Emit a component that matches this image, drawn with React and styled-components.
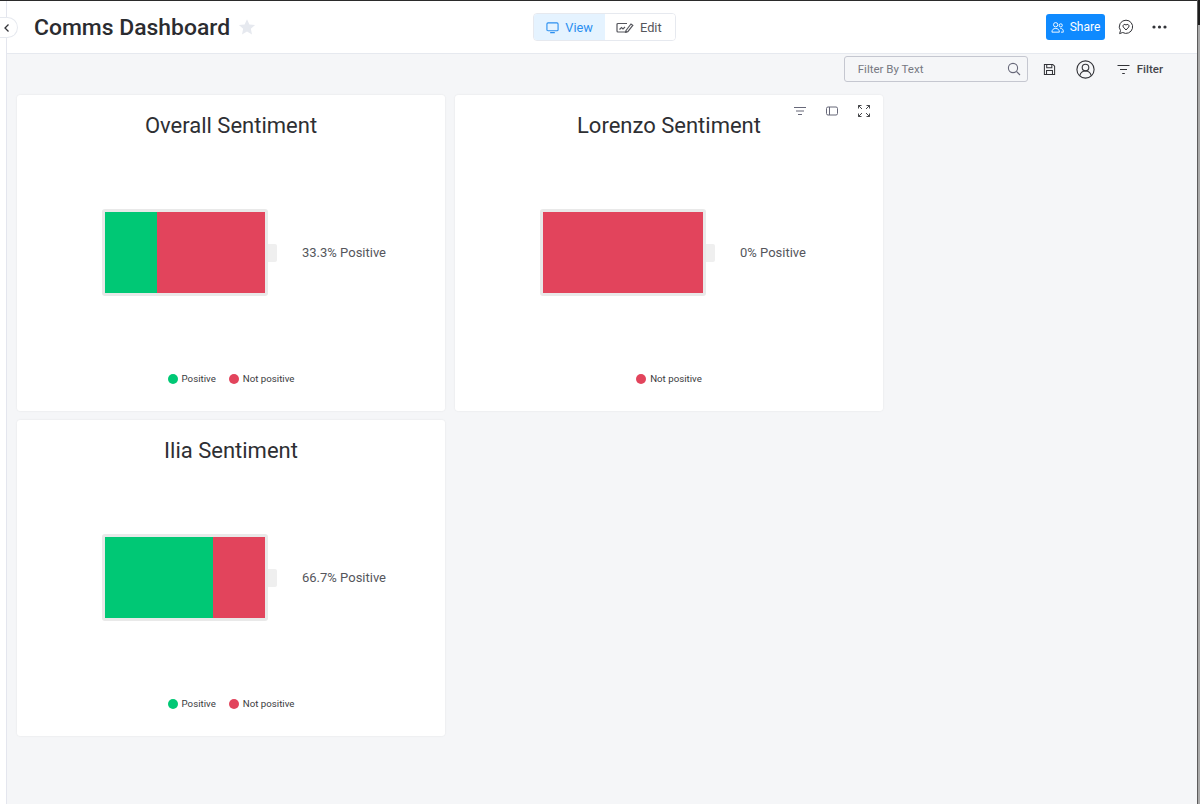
import React from "react";
import styled, { createGlobalStyle } from "styled-components";

const Global = createGlobalStyle`
  html, body { margin: 0; padding: 0; height: 100%; }
  body { font-family: Roboto, "Liberation Sans", sans-serif; background: #fff; overflow: hidden; }
  #root { height: 100%; }
`;

const Page = styled.div`
  width: 1200px; height: 804px; display: flex; position: relative; background: #fff; overflow: hidden;
`;
const WindowEdge = styled.div`
  width: 3px; flex: none; box-sizing: border-box; border-left: 1px solid #5c5c5c; background: #a9a9a9; display: flex; flex-direction: column;
`;
const EdgeCap = styled.div`height: 25px; background: #1c1c1c;`;
const Frame = styled.div`
  flex: 1; min-width: 0; display: flex; flex-direction: column; border-top: 1px solid #2b2b2b; box-sizing: border-box;
`;
const Shell = styled.div`
  flex: 1; margin-left: 6px; border-left: 1px solid #e4e6ee; display: flex; flex-direction: column; min-height: 0;
`;
const Header = styled.header`
  height: 53px; display: grid; grid-template-columns: 1fr auto 1fr; align-items: center;
  border-bottom: 1px solid #e6e9ef; box-sizing: border-box; padding: 0 30px 0 27px; background: #fff;
`;
const Collapse = styled.button`
  position: absolute; left: 0; top: 17px; width: 18px; height: 21px; border-radius: 0 11px 11px 0;
  border: 1px solid #e6e9ef; border-left: 0; background: #fff; padding: 0 4px 0 0; display: flex; align-items: center; justify-content: center; color: #323338;
`;
const TitleRow = styled.div`display: flex; align-items: center; gap: 8px;`;
const Title = styled.h1`margin: 0; font-size: 22.9px; font-weight: 500; color: #2b2c30;`;
const Toggle = styled.div`
  display: flex; height: 26px; border: 1px solid #e6e9ef; border-radius: 4px; overflow: hidden; margin-left: 8px;
`;
const ToggleItem = styled.div`
  display: flex; align-items: center; gap: 6px; font-size: 12.8px; padding: ${p => (p.$active ? "0 12px 0 12px" : "0 13px 0 11px")};
  background: ${p => (p.$active ? "#e5f3ff" : "#fff")}; color: ${p => (p.$active ? "#2b8ff0" : "#55565c")};
`;
const HeaderRight = styled.div`display: flex; justify-content: flex-end; align-items: center; gap: 13px;`;
const Share = styled.button`
  height: 26px; width: 59px; background: #0f8aff; border: 0; border-radius: 3px; color: #fff; font: 12px Roboto, sans-serif;
  display: flex; align-items: center; justify-content: center; gap: 6px; padding: 0;
`;
const IconBtn = styled.span`display: inline-flex; align-items: center; color: #323338; margin-left: ${p => p.$ml || 0}px;`;
const Content = styled.main`flex: 1; background: #f5f6f8; padding: 0 10px; min-height: 0;`;
const FilterBar = styled.div`
  height: 41px; display: flex; justify-content: flex-end; align-items: flex-start; padding: 2px 24px 0 0; box-sizing: border-box;
`;
const FilterItems = styled.div`height: 26px; display: flex; align-items: center;`;
const Search = styled.div`
  width: 184px; height: 26px; border: 1px solid #c5c7d0; border-radius: 3px; display: flex; align-items: center; justify-content: space-between;
  padding: 0 6px 0 13px; box-sizing: border-box; font-size: 11.5px; color: #777982; margin-right: 15px;
`;
const FilterLabel = styled.span`display: inline-flex; align-items: center; gap: 7px; font-size: 11.5px; font-weight: 500; color: #45464c; margin-left: 22px;`;
const Grid = styled.div`
  display: grid; grid-template-columns: repeat(2, 428px); grid-auto-rows: 315.5px; column-gap: 10px; row-gap: 9.5px;
`;
const Card = styled.section`
  background: #fff; border-radius: 3px; box-shadow: 0 0 2px rgba(0,0,0,.09); position: relative; display: flex; flex-direction: column; align-items: center; box-sizing: border-box;
`;
const CardTitle = styled.h2`margin: 17px 0 0; font-size: 22px; line-height: 28px; font-weight: 400; color: #2e2f33;`;
const Tools = styled.div`position: absolute; top: 9px; right: 12px; display: flex; gap: 18px; color: #676879;`;
const Chart = styled.div`position: absolute; left: 85px; top: 114px; display: flex; align-items: center;`;
const Battery = styled.div`
  width: 160px; height: 81px; border: 3px solid #e9e9e9; border-radius: 3px; display: flex; background: #e9e9e9;
`;
const Seg = styled.div`background: ${p => p.$c}; height: 100%;`;
const Nub = styled.div`width: 9px; height: 18px; background: #efefef; border-radius: 0 2px 2px 0;`;
const Pct = styled.div`font-size: 13px; color: #55565c; margin-left: 25px; white-space: nowrap;`;
const Legend = styled.div`position: absolute; left: 0; right: 0; top: 277px; display: flex; justify-content: center; gap: 13px; font-size: 9.7px; color: #3a3b40;`;
const LegendItem = styled.div`display: flex; align-items: center; gap: 4px; line-height: 14px;`;
const Dot = styled.span`width: 10px; height: 10px; border-radius: 50%; background: ${p => p.$c};`;

const G = "#00c875", R = "#e2445c";

const Sentiment = ({ title, pos, label, tools }) => (
  <Card>
    <CardTitle>{title}</CardTitle>
    {tools && (
      <Tools>
        <svg width="14" height="14" viewBox="0 0 14 14" fill="none" stroke="currentColor"><path d="M1 3.500h12M3 7h8M5 10.500h4" /></svg>
        <svg width="14" height="14" viewBox="0 0 14 14" fill="none" stroke="currentColor"><rect x="1.500" y="3" width="11" height="8" rx="1.500" /><path d="M4.500 3v8" /></svg>
        <svg width="14" height="14" viewBox="0 0 14 14" fill="none" stroke="#323338" strokeWidth="0.9"><path d="M1.500 4.500v-3h3M1.500 1.500l3.500 3.500M9.500 1.500h3v3M12.500 1.500L9 5M1.500 9.500v3h3M1.500 12.500L5 9M9.500 12.500h3v-3M12.500 12.500L9 9" /></svg>
      </Tools>
    )}
    <Chart>
      <Battery>
        {pos > 0 && <Seg $c={G} style={{ width: `${pos}%` }} />}
        <Seg $c={R} style={{ width: `${100 - pos}%` }} />
      </Battery>
      <Nub />
      <Pct>{label}</Pct>
    </Chart>
    <Legend>
      {pos > 0 && <LegendItem><Dot $c={G} />Positive</LegendItem>}
      <LegendItem><Dot $c={R} />Not positive</LegendItem>
    </Legend>
  </Card>
);

export default function App() {
  return (
    <Page>
      <Global />
      <Collapse aria-label="collapse">
        <svg width="8" height="10" viewBox="0 0 8 10" fill="none" stroke="currentColor" strokeWidth="1.3"><path d="M5.500 1.500L2 5l3.500 3.500" /></svg>
      </Collapse>
      <Frame>
        <Shell>
          <Header>
            <TitleRow>
              <Title>Comms Dashboard</Title>
              <svg width="18" height="18" viewBox="0 0 24 24" fill="#e6e9ef"><path d="M12 1.500l3.200 7 7.600.8-5.700 5.100 1.600 7.500L12 18.100l-6.700 3.800 1.600-7.500L1.200 9.300l7.600-.8z" /></svg>
            </TitleRow>
            <Toggle>
              <ToggleItem $active>
                <svg width="13" height="13" viewBox="0 0 14 14" fill="none" stroke="currentColor" strokeWidth="1.200"><rect x="1" y="2" width="12" height="8.500" rx="1.200" /><path d="M4.500 12.500h5" /></svg>
                View
              </ToggleItem>
              <ToggleItem>
                <svg width="18" height="13" viewBox="0 0 18 13" fill="none" stroke="currentColor" strokeWidth="1.200"><path d="M11 2.500H2a1 1 0 0 0-1 1V10a1 1 0 0 0 1 1h9" /><path d="M3.500 8.500l2-2 1.500 1.500 2-2" /><path d="M10 9.500l5-6.500 1.800 1.300-5 6.300-2.200.6z" /></svg>
                Edit
              </ToggleItem>
            </Toggle>
            <HeaderRight>
              <Share>
                <svg width="13" height="13" viewBox="0 0 14 14" fill="none" stroke="currentColor"><circle cx="5" cy="4" r="2.300" /><circle cx="10.500" cy="4.700" r="1.700" /><path d="M1 12c0-2.600 1.600-4 4-4s4 1.400 4 4zM10 8c2 0 3.300 1 3.300 3.300v.7h-2.500" /></svg>
                Share
              </Share>
              <IconBtn>
                <svg width="16" height="16" viewBox="0 0 16 16" fill="none" stroke="currentColor" strokeWidth="1"><path d="M8 1.200a6.600 6.600 0 1 1-3.300 12.300L1.600 14.600l.9-3A6.600 6.600 0 0 1 8 1.200z" /><path d="M8 11L5.300 8.100a1.600 1.600 0 0 1 2.700-2 1.600 1.600 0 0 1 2.700 2z" /></svg>
              </IconBtn>
              <IconBtn $ml={5}>
                <svg width="15" height="4" viewBox="0 0 15 4" fill="currentColor"><circle cx="2" cy="2" r="1.600" /><circle cx="7.500" cy="2" r="1.600" /><circle cx="13" cy="2" r="1.600" /></svg>
              </IconBtn>
            </HeaderRight>
          </Header>
          <Content>
            <FilterBar>
              <FilterItems>
                <Search>
                  Filter By Text
                  <svg width="14" height="14" viewBox="0 0 14 14" fill="none" stroke="#676879" strokeWidth="1.100"><circle cx="6" cy="6" r="4.600" /><path d="M9.500 9.500L13 13" /></svg>
                </Search>
                <IconBtn>
                  <svg width="13" height="13" viewBox="0 0 14 14" fill="none" stroke="currentColor" strokeWidth="1.100"><path d="M1.500 1.500h9l2 2v9h-11z" /><path d="M4 1.500V5h5.500V1.500M3.800 12.500V8h6.400v4.500" /></svg>
                </IconBtn>
                <IconBtn $ml={20}>
                  <svg width="19" height="19" viewBox="0 0 19 19" fill="none" stroke="currentColor" strokeWidth="1.100"><circle cx="9.500" cy="9.500" r="8.600" /><circle cx="9.500" cy="7.600" r="3.300" /><path d="M3.800 15.600c.8-3 3-4.600 5.700-4.600s4.900 1.600 5.700 4.600" /></svg>
                </IconBtn>
                <FilterLabel>
                  <svg width="13" height="11" viewBox="0 0 13 11" fill="none" stroke="#323338" strokeWidth="1.200"><path d="M.5 1.500h12M3 5.500h7M5.200 9.500h2.600" /></svg>
                  Filter
                </FilterLabel>
              </FilterItems>
            </FilterBar>
            <Grid>
              <Sentiment title="Overall Sentiment" pos={32.5} label="33.3% Positive" />
              <Sentiment title="Lorenzo Sentiment" pos={0} label="0% Positive" tools />
              <Sentiment title="Ilia Sentiment" pos={67.5} label="66.7% Positive" />
            </Grid>
          </Content>
        </Shell>
      </Frame>
      <WindowEdge><EdgeCap /></WindowEdge>
    </Page>
  );
}
